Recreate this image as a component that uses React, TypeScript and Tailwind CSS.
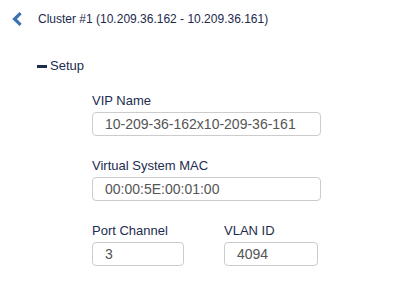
import React from "react";

function Field({ label, value, width }: { label: string; value: string; width: string }) {
  return (
    <div className="flex flex-col">
      <div className="text-[13px] leading-[16px] text-[#1d2c4f] mb-[3px]">{label}</div>
      <div
        className={`${width} h-[24px] border border-[#cccccc] rounded-[4px] flex items-center pl-[12px] text-[14px] leading-[16px] text-[#555555] bg-white`}
      >
        {value}
      </div>
    </div>
  );
}

export default function App() {
  return (
    <div
      className="w-[395px] h-[283px] bg-white relative"
      style={{ fontFamily: '"Liberation Sans", Arial, sans-serif' }}
    >
      <div className="flex items-center pl-[12px] pt-[12px]">
        <svg width="10" height="14" viewBox="0 0 10 14" className="shrink-0">
          <polyline
            points="8.6,1.2 2.6,7 8.6,12.8"
            fill="none"
            stroke="#3a70b4"
            strokeWidth="3.2"
            strokeLinejoin="miter"
          />
        </svg>
        <div className="ml-[16px] text-[12px] leading-[14px] text-[#1b2a4d]">
          Cluster #1 (10.209.36.162 - 10.209.36.161)
        </div>
      </div>

      <div className="flex items-center pl-[37px] mt-[32px]">
        <div className="w-[10px] h-[3px] bg-[#1d2c4f] mr-[3px]" />
        <div className="text-[13px] leading-[16px] text-[#1d2c4f]">Setup</div>
      </div>

      <div className="pl-[92px] mt-[19px] flex flex-col gap-[22px]">
        <Field label="VIP Name" value="10-209-36-162x10-209-36-161" width="w-[229px]" />
        <Field label="Virtual System MAC" value="00:00:5E:00:01:00" width="w-[229px]" />
        <div className="flex gap-[40px]">
          <Field label="Port Channel" value="3" width="w-[92px]" />
          <Field label="VLAN ID" value="4094" width="w-[94px]" />
        </div>
      </div>
    </div>
  );
}
